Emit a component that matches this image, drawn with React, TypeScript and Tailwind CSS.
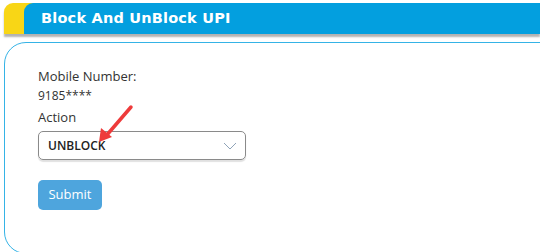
export default function App() {
  return (
    <div
      className="relative w-[540px] h-[252px] overflow-hidden bg-white"
      style={{ fontFamily: '"Open Sans", "Liberation Sans", sans-serif' }}
    >
      {/* header bar */}
      <div className="mt-[3px] ml-[4px] h-[31px] flex rounded-tl-[9px] bg-[#f8d616] shadow-[0_3px_2px_rgba(0,0,0,0.3)]">
        <div className="ml-[20px] flex-1 flex items-center rounded-tl-[9px] bg-[#039fdf] pl-[17px]">
          <span
            className="text-white font-bold text-[14.5px] tracking-[0.2px]"
            style={{ fontFamily: '"DejaVu Sans", Verdana, sans-serif' }}
          >
            Block And UnBlock UPI
          </span>
        </div>
      </div>

      {/* card */}
      <div className="mt-[8px] ml-[4px] mr-[-20px] h-[212px] border border-[#35b3e6] rounded-l-[22px] pl-[33px] pt-[23px]">
        <div className="text-[13px] leading-[20px] text-[#333]">Mobile Number:</div>
        <div className="text-[12px] leading-[20px] text-[#333]">9185****</div>
        <div className="text-[13px] leading-[22px] text-[#333]">Action</div>
        <div className="mt-[3px] w-[208px] h-[29px] rounded-[5px] border border-[#8a8a8a] shadow-[0_2px_1px_rgba(0,0,0,0.12)] flex items-center justify-between pl-[9px] pr-[8px]">
          <span className="text-[12px] font-semibold text-[#222]">UNBLOCK</span>
          <svg width="14" height="8" viewBox="0 0 14 8" fill="none">
            <path d="M1 1l6 6 6-6" stroke="#8fa3b8" strokeWidth="1" />
          </svg>
        </div>
        <button className="mt-[20px] w-[64px] h-[30px] rounded-[5px] bg-[#4ea5dd] text-white text-[13px]">
          Submit
        </button>
      </div>

      {/* annotation arrow */}
      <svg
        className="absolute left-[95px] top-[102px]"
        width="42"
        height="44"
        viewBox="0 0 42 44"
        fill="none"
      >
        <path d="M36 5L11 34" stroke="#ee3b3b" strokeWidth="3.5" strokeLinecap="round" />
        <path d="M4 40l2-14 11 9z" fill="#ee3b3b" />
      </svg>
    </div>
  );
}
